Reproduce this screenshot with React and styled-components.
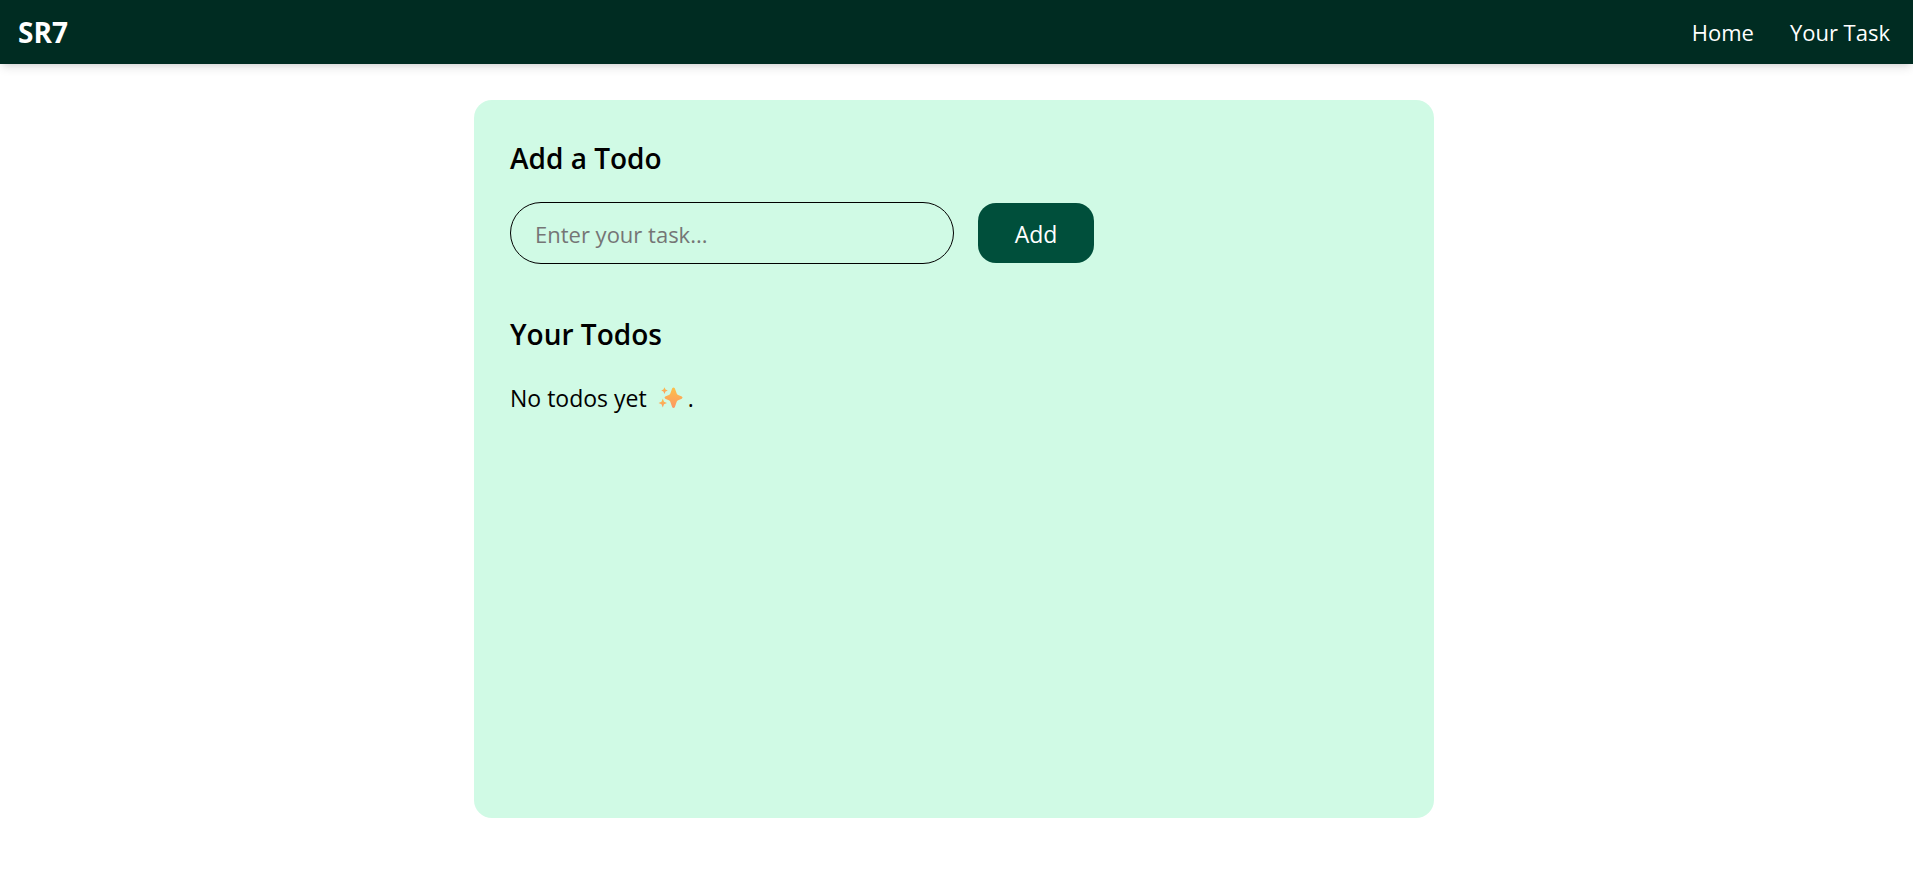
import React, { useState } from "react";
import styled, { createGlobalStyle } from "styled-components";

const GlobalStyle = createGlobalStyle`
  *, *::before, *::after { box-sizing: border-box; }
  body {
    margin: 0;
    background: #fff;
    color: #000;
    font-family: "Segoe UI", "Open Sans", "Noto Sans", sans-serif;
    font-size: 23px;
    line-height: 36px;
  }
`;

const Navbar = styled.nav`
  display: flex;
  align-items: center;
  justify-content: space-between;
  height: 64px;
  padding: 0 23px 0 18px;
  background: #002c22;
  color: #fff;
  box-shadow: 0 6px 9px -2px rgba(0, 0, 0, 0.1), 0 3px 6px -3px rgba(0, 0, 0, 0.1);
`;

const Brand = styled.span`
  font-size: 28px;
  font-weight: 700;
`;

const NavList = styled.ul`
  display: flex;
  gap: 36px;
  margin: 0;
  padding: 0;
  list-style: none;
  font-size: 22px;
`;

const NavLink = styled.a`
  color: inherit;
  text-decoration: none;
`;

const Page = styled.main`
  padding: 36px 5px 61px 0;
`;

const Card = styled.div`
  max-width: 960px;
  min-height: calc(100vh - 161px);
  margin: 0 auto;
  padding: 36px;
  border-radius: 18px;
  background: #d0fae5;
`;

const Heading = styled.h2`
  margin: 0;
  padding: 2px 0 0;
  font-size: 28px;
  line-height: 40px;
  font-weight: 600;
`;

const TaskForm = styled.form`
  display: flex;
  align-items: center;
  gap: 24px;
  margin: 24px 0 48px;
`;

const TaskInput = styled.input`
  width: 444px;
  height: 62px;
  padding: 2px 24px 0;
  border: 1px solid #000;
  border-radius: 31px;
  background: transparent;
  color: inherit;
  font: inherit;
  font-size: 22px;
  &::placeholder { color: #757575; opacity: 1; }
`;

const AddButton = styled.button`
  width: 116px;
  height: 60px;
  padding: 2px 0 0;
  border: 0;
  border-radius: 18px;
  background: #004f3b;
  color: #fff;
  font: inherit;
  cursor: pointer;
`;

const TodoList = styled.ul`
  margin: 26px 0 0;
  padding: 0;
  list-style: none;
`;

const Empty = styled.p`
  display: flex;
  align-items: center;
  margin: 26px 0 0;
`;

const SparkleIcon = styled.svg`
  width: 26px;
  height: 24px;
  margin: 0 4px 0 11px;
`;

function Sparkles() {
  return (
    <SparkleIcon viewBox="0 0 26 24" role="img" aria-label="sparkles">
      <defs>
        <linearGradient id="glow" x1="0" y1="0" x2="0" y2="1">
          <stop offset="0" stopColor="#fcc04a" />
          <stop offset="1" stopColor="#fd9763" />
        </linearGradient>
      </defs>
      <g fill="url(#glow)">
        <path d="M14.2 2.3Q15.5.8 16.8 2.3L18.8 7.7Q19.2 8.7 20.2 9.1L23.8 10.5Q25.4 11.6 23.8 12.8L20.2 14.2Q19.2 14.6 18.8 15.6L16.8 21.2Q15.5 22.8 14.2 21.2L12.2 15.6Q11.8 14.6 10.8 14.2L7.2 12.8Q5.8 11.6 7.2 10.5L10.8 9.1Q11.8 8.7 12.2 7.7Z" />
        <path d="M6.5 1.3L7.5 3.4L9.8 4.5L7.5 5.6L6.5 8L5.4 5.6L3.2 4.5L5.4 3.4Z" />
        <path d="M4.8 12.6L6 15.7L9 17L6 18.3L4.8 21.5L3.5 18.3L.5 17L3.5 15.7Z" />
      </g>
    </SparkleIcon>
  );
}

export default function App() {
  const [task, setTask] = useState("");
  const [todos, setTodos] = useState([]);

  const addTodo = (event) => {
    event.preventDefault();
    if (!task.trim()) return;
    setTodos([...todos, task.trim()]);
    setTask("");
  };

  return (
    <>
      <GlobalStyle />
      <Navbar>
        <Brand>SR7</Brand>
        <NavList>
          <li><NavLink href="#home">Home</NavLink></li>
          <li><NavLink href="#tasks">Your Task</NavLink></li>
        </NavList>
      </Navbar>
      <Page>
        <Card>
          <Heading>Add a Todo</Heading>
          <TaskForm onSubmit={addTodo}>
            <TaskInput
              type="text"
              aria-label="Task"
              placeholder="Enter your task..."
              value={task}
              onChange={(event) => setTask(event.target.value)}
            />
            <AddButton type="submit">Add</AddButton>
          </TaskForm>
          <Heading>Your Todos</Heading>
          {todos.length === 0 ? (
            <Empty>No todos yet<Sparkles />.</Empty>
          ) : (
            <TodoList>
              {todos.map((todo, index) => <li key={index}>{todo}</li>)}
            </TodoList>
          )}
        </Card>
      </Page>
    </>
  );
}
